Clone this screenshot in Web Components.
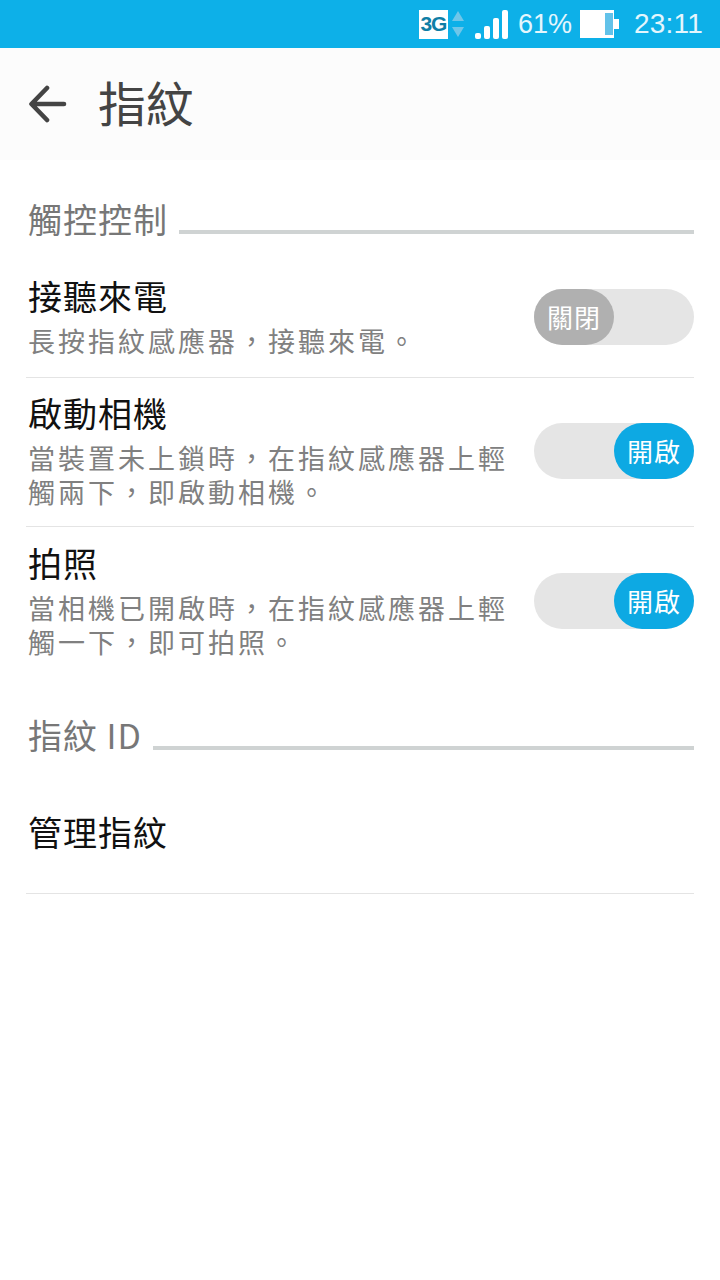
<!DOCTYPE html>
<html lang="zh-Hant">
<head>
<meta charset="utf-8">
<style>
html, body { margin: 0; padding: 0; background: #fff; }
body { width: 720px; height: 1280px; overflow: hidden; font-family: "Noto Sans CJK TC", "Noto Sans", sans-serif; }
</style>
</head>
<body>
<status-bar></status-bar>
<title-bar>指紋</title-bar>
<settings-section label="觸控控制" style="--top: 40px; --gap: 19px">
    <setting-row label="接聽來電" state="off" style="--h: 119px">
        <div>長按指紋感應器，接聽來電。</div>
    </setting-row>
    <setting-row label="啟動相機" state="on" style="--h: 149px">
        <div>當裝置未上鎖時，在指紋感應器上輕</div>
        <div>觸兩下，即啟動相機。</div>
    </setting-row>
    <setting-row label="拍照" state="on" last style="--h: 150px">
        <div>當相機已開啟時，在指紋感應器上輕</div>
        <div>觸一下，即可拍照。</div>
    </setting-row>
</settings-section>
<settings-section label="指紋 ID" style="--top: 39px; --gap: 16px">
    <setting-row label="管理指紋" style="--h: 122px"></setting-row>
</settings-section>

<script>
class StatusBar extends HTMLElement {
    constructor() {
        super()
        this.attachShadow({ mode: "open" })
        this.shadowRoot.innerHTML = `
            <style>
            :host {
                display: flex;
                align-items: center;
                justify-content: flex-end;
                height: 48px;
                box-sizing: border-box;
                padding-right: 17px;
                background: #0db0e8;
                color: #e4f6fd;
                font-family: "Liberation Sans", sans-serif;
                font-size: 28px;
            }
            .net {
                width: 29px;
                height: 29px;
                background: #fff;
                color: #0f7ea6;
                font-size: 21px;
                font-weight: 700;
                letter-spacing: -1px;
                display: flex;
                align-items: center;
                justify-content: center;
            }
            svg { display: block; }
            .arrows { margin-left: 3px; }
            .signal { margin-left: 9px; }
            .pct { margin-left: 10px; font-size: 27px; }
            .batt { margin-left: 8px; }
            .time { margin-left: 14px; letter-spacing: 0.2px; }
            </style>
            <span class="net">3G</span>
            <svg class="arrows" width="14" height="28" viewBox="0 0 14 28">
                <path d="M7 1 L13 11 H1 Z" fill="#6fc6e9"/>
                <path d="M7 27 L13 17 H1 Z" fill="#6fc6e9"/>
            </svg>
            <svg class="signal" width="34" height="30" viewBox="0 0 34 30">
                <rect x="1" y="24" width="6" height="6" rx="2" fill="#fff"/>
                <rect x="10" y="17" width="6" height="13" rx="2" fill="#fff"/>
                <rect x="19" y="9" width="6" height="21" rx="2" fill="#fff"/>
                <rect x="28" y="1" width="6" height="29" rx="2" fill="#fff"/>
            </svg>
            <span class="pct">61%</span>
            <svg class="batt" width="40" height="28" viewBox="0 0 40 28">
                <rect x="0" y="0" width="34" height="28" fill="#fff"/>
                <rect x="25" y="3" width="8" height="22" fill="#62c2e9"/>
                <rect x="34" y="9" width="5" height="10" fill="#fff"/>
            </svg>
            <span class="time">23:11</span>
        `
    }
}

class TitleBar extends HTMLElement {
    constructor() {
        super()
        this.attachShadow({ mode: "open" })
        this.shadowRoot.innerHTML = `
            <style>
            :host {
                display: flex;
                align-items: center;
                height: 112px;
                box-sizing: border-box;
                padding-left: 29px;
                background: #fcfcfc;
                color: #444;
                font-size: 48px;
                line-height: 1;
            }
            svg { display: block; margin-right: 31px; }
            .text { padding-bottom: 6px; }
            </style>
            <svg width="38" height="38" viewBox="0 0 38 38">
                <path d="M35 19 H3 M18 3 L2.5 19 L18 35" fill="none" stroke="#444" stroke-width="4.6" stroke-linecap="round" stroke-linejoin="round"/>
            </svg>
            <span class="text"><slot></slot></span>
        `
    }
}

class SettingsSection extends HTMLElement {
    constructor() {
        super()
        this.attachShadow({ mode: "open" })
        this.shadowRoot.innerHTML = `
            <style>
            :host {
                display: block;
                padding: var(--top) 26px 0 26px;
            }
            .head {
                display: flex;
                align-items: flex-end;
                height: 40px;
                padding-left: 2px;
                color: #777;
                font-size: 34px;
                letter-spacing: 1px;
                line-height: 40px;
            }
            .label { margin-bottom: 1px; }
            .head i {
                flex: 1;
                height: 4px;
                margin: 0 0 6px 11px;
                background: #cfd3d3;
            }
            .rows { padding-top: var(--gap); }
            </style>
            <div class="head"><span class="label"></span><i></i></div>
            <div class="rows"><slot></slot></div>
        `
        this.shadowRoot.querySelector(".label").textContent = this.getAttribute("label")
    }
}

class SettingRow extends HTMLElement {
    constructor() {
        super()
        this.attachShadow({ mode: "open" })
        this.shadowRoot.innerHTML = `
            <style>
            :host {
                display: flex;
                align-items: center;
                justify-content: space-between;
                box-sizing: border-box;
                height: var(--h);
                padding-bottom: 2px;
                border-bottom: 1px solid #e4e4e4;
            }
            :host([last]) { border-bottom: 0; }
            .text { padding-left: 2px; }
            .label {
                color: #111;
                font-size: 34px;
                letter-spacing: 1px;
                line-height: 40px;
            }
            .desc {
                color: #808080;
                font-size: 27px;
                letter-spacing: 3px;
                line-height: 34px;
                margin-top: 8px;
            }
            </style>
            <div class="text">
                <div class="label"></div>
                <div class="desc"><slot></slot></div>
            </div>
        `
        this.shadowRoot.querySelector(".label").textContent = this.getAttribute("label")
        if (this.hasAttribute("state")) {
            let sw = document.createElement("toggle-switch")
            sw.setAttribute("state", this.getAttribute("state"))
            this.shadowRoot.appendChild(sw)
        } else {
            this.shadowRoot.querySelector(".desc").style.display = "none"
        }
    }
}

class ToggleSwitch extends HTMLElement {
    constructor() {
        super()
        this.attachShadow({ mode: "open" })
        this.shadowRoot.innerHTML = `
            <style>
            :host {
                display: flex;
                flex: none;
                width: 160px;
                height: 56px;
                border-radius: 28px;
                background: #e5e5e5;
            }
            :host([state="on"]) { justify-content: flex-end; }
            .knob {
                width: 80px;
                height: 56px;
                border-radius: 28px;
                background: #b0b0b0;
                color: #fff;
                font-size: 26px;
                line-height: 56px;
                text-align: center;
                letter-spacing: 1px;
            }
            :host([state="on"]) .knob { background: #0da9e3; }
            </style>
            <div class="knob"></div>
        `
    }
    connectedCallback() {
        let on = this.getAttribute("state") == "on"
        this.shadowRoot.querySelector(".knob").textContent = on ? "開啟" : "關閉"
    }
}

customElements.define("status-bar", StatusBar)
customElements.define("title-bar", TitleBar)
customElements.define("settings-section", SettingsSection)
customElements.define("setting-row", SettingRow)
customElements.define("toggle-switch", ToggleSwitch)
</script>
</body>
</html>
